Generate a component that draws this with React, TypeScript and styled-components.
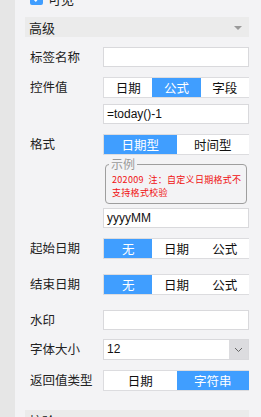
import * as React from 'react';
import styled, { createGlobalStyle } from 'styled-components';

const GlobalStyle = createGlobalStyle`
  html, body {
    margin: 0;
    padding: 0;
    height: 100%;
    overflow: hidden;
  }
  body {
    font-family: "Noto Sans CJK SC", "Liberation Sans", sans-serif;
    font-size: 12px;
    color: #222;
    background: #f3f3f5;
  }
`;

const BLUE = '#409eff';

type SegProps = {
  options: string[];
  active: number;
  cols?: string;
};

const Segmented: React.FC<SegProps> = ({ options, active, cols }) => (
  <SegWrap $cols={cols ?? `repeat(${options.length}, 1fr)`}>
    {options.map((o, i) => (
      <SegItem key={o} $active={i === active}>
        {o}
      </SegItem>
    ))}
  </SegWrap>
);

export default function App() {
  return (
    <Page>
      <GlobalStyle />
      <LeftStrip />
      <Panel>
        <CheckRow>
          <CheckBox>
            <svg width="9" height="9" viewBox="0 0 9 9">
              <path d="M1.5 4.5 L3.8 6.8 L7.5 2.2" stroke="#fff" strokeWidth="1.6" fill="none" />
            </svg>
          </CheckBox>
          <span>可见</span>
        </CheckRow>

        <SectionHeader $mt={12}>
          <span>高级</span>
          <Caret />
        </SectionHeader>

        <Row $mt={10}>
          <Label>标签名称</Label>
          <Controls>
            <TextInput />
          </Controls>
        </Row>

        <Row $mt={10}>
          <Label>控件值</Label>
          <Controls $gap={6}>
            <Segmented options={['日期', '公式', '字段']} active={1} />
            <TextInput>=today()-1</TextInput>
          </Controls>
        </Row>

        <Row $mt={10}>
          <Label>格式</Label>
          <Controls>
            <Segmented options={['日期型', '时间型']} active={0} />
            <Example>
              <Legend>示例</Legend>
              <Hint>202009&nbsp; 注：自定义日期格式不支持格式校验</Hint>
            </Example>
            <TextInput $mt={4}>yyyyMM</TextInput>
          </Controls>
        </Row>

        <Row $mt={10}>
          <Label>起始日期</Label>
          <Controls>
            <Segmented options={['无', '日期', '公式']} active={0} />
          </Controls>
        </Row>

        <Row $mt={15}>
          <Label>结束日期</Label>
          <Controls>
            <Segmented options={['无', '日期', '公式']} active={0} />
          </Controls>
        </Row>

        <Row $mt={15}>
          <Label>水印</Label>
          <Controls>
            <TextInput />
          </Controls>
        </Row>

        <Row $mt={9}>
          <Label>字体大小</Label>
          <Controls>
            <Select>
              <SelectValue>12</SelectValue>
              <SelectButton>
                <svg width="9" height="6" viewBox="0 0 9 6">
                  <path d="M1 1 L4.5 4.5 L8 1" stroke="#666" strokeWidth="1" fill="none" />
                </svg>
              </SelectButton>
            </Select>
          </Controls>
        </Row>

        <Row $mt={10}>
          <Label>返回值类型</Label>
          <Controls>
            <Segmented options={['日期', '字符串']} active={1} />
          </Controls>
        </Row>

        <SectionHeader $mt={19}>
          <span>校验</span>
        </SectionHeader>
      </Panel>
    </Page>
  );
}

const Page = styled.div`
  display: flex;
  width: 261px;
  height: 417px;
  overflow: hidden;
`;

const LeftStrip = styled.div`
  width: 15px;
  flex-shrink: 0;
  background: #e6e6e6;
`;

const Panel = styled.div`
  flex: 1;
  background: #f3f3f5;
  padding: 0 12px 0 10px;
  display: flex;
  flex-direction: column;
`;

const CheckRow = styled.div`
  display: flex;
  align-items: center;
  gap: 5px;
  height: 14px;
  margin-top: -9px;
  padding-left: 5px;
  font-size: 13px;
  color: #222;
`;

const CheckBox = styled.div`
  width: 13px;
  height: 13px;
  border-radius: 2px;
  background: ${BLUE};
  display: flex;
  align-items: center;
  justify-content: center;
`;

const SectionHeader = styled.div<{ $mt: number }>`
  margin-top: ${(p) => p.$mt}px;
  height: 20px;
  flex-shrink: 0;
  background: #ebebeb;
  display: flex;
  align-items: center;
  justify-content: space-between;
  padding: 0 7px 0 4px;
  font-size: 13px;
  color: #222;
`;

const Caret = styled.div`
  width: 0;
  height: 0;
  border-left: 4px solid transparent;
  border-right: 4px solid transparent;
  border-top: 4px solid #9a9a9a;
  margin-top: 2px;
`;

const Row = styled.div<{ $mt: number }>`
  margin-top: ${(p) => p.$mt}px;
  display: grid;
  grid-template-columns: 78px 1fr;
  align-items: start;
  flex-shrink: 0;
`;

const Label = styled.div`
  padding-left: 5px;
  line-height: 19px;
  font-size: 12.5px;
  color: #222;
`;

const Controls = styled.div<{ $gap?: number }>`
  display: flex;
  flex-direction: column;
  gap: ${(p) => p.$gap ?? 0}px;
`;

const TextInput = styled.div<{ $mt?: number }>`
  margin-top: ${(p) => p.$mt ?? 0}px;
  height: 18px;
  background: #fff;
  border: 1px solid #d9d9dc;
  padding: 0 3px;
  line-height: 18px;
  font-family: "Liberation Sans", "Noto Sans CJK SC", sans-serif;
  font-size: 12px;
  color: #111;
`;

const SegWrap = styled.div<{ $cols: string }>`
  display: grid;
  grid-template-columns: ${(p) => p.$cols};
  height: 21px;
  box-sizing: border-box;
  border: 1px solid #dcdcdf;
  border-right: none;
  background: #fff;
`;

const SegItem = styled.div<{ $active: boolean }>`
  display: flex;
  align-items: center;
  justify-content: center;
  font-size: 12.5px;
  color: ${(p) => (p.$active ? '#fff' : '#111')};
  background: ${(p) => (p.$active ? BLUE : '#fff')};
`;

const Example = styled.div`
  position: relative;
  margin: 9px 2px 0 2px;
  height: 40px;
  box-sizing: border-box;
  border: 1px solid #9e9e9e;
  border-radius: 4px;
  padding: 8px 4px 0 6px;
`;

const Legend = styled.span`
  position: absolute;
  top: -8px;
  left: 3px;
  padding: 0 2px;
  background: #f3f3f5;
  font-size: 12px;
  line-height: 14px;
  color: #999;
`;

const Hint = styled.div`
  font-size: 9px;
  line-height: 13px;
  color: #f01010;
  letter-spacing: 0.3px;
`;

const Select = styled.div`
  display: flex;
  height: 21px;
  box-sizing: border-box;
  border: 1px solid #d9d9dc;
  background: #fff;
`;

const SelectValue = styled.div`
  flex: 1;
  padding: 0 3px;
  line-height: 19px;
  font-family: "Liberation Sans", sans-serif;
  font-size: 12px;
  color: #111;
`;

const SelectButton = styled.div`
  width: 19px;
  background: #dcdcdf;
  display: flex;
  align-items: center;
  justify-content: center;
`;
